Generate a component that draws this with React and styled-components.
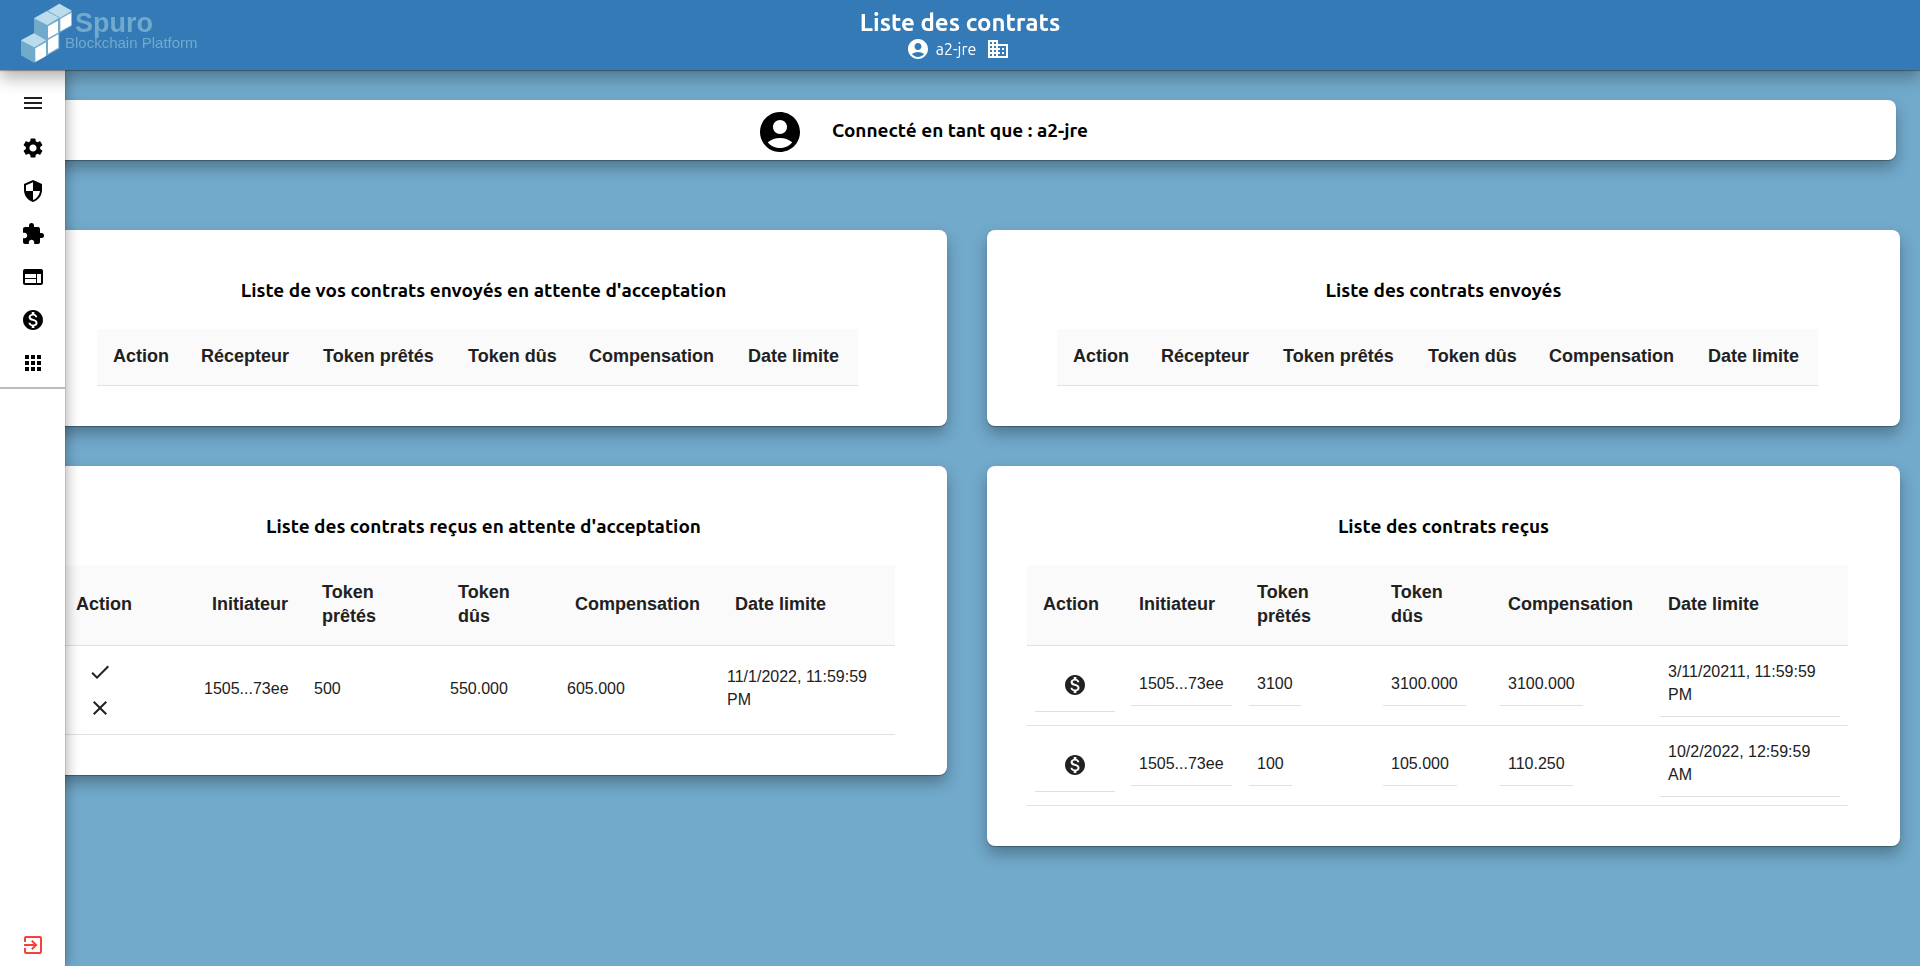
import React from "react";
import styled, { createGlobalStyle } from "styled-components";
import {
  MdMenu,
  MdSettings,
  MdSecurity,
  MdExtension,
  MdWeb,
  MdMonetizationOn,
  MdApps,
  MdExitToApp,
  MdAccountCircle,
  MdBusiness,
  MdCheck,
  MdClose,
} from "react-icons/md";

const elevation = "0 1px 1px rgba(0, 0, 0, 0.3), 0 8px 16px rgba(0, 0, 0, 0.3)";
const titleFont = '"Ubuntu", "Noto Sans", sans-serif';

const GlobalStyle = createGlobalStyle`
  * { box-sizing: border-box; }
  body {
    margin: 0;
    background: #72aacc;
    color: #000;
    font-family: "Liberation Sans", Arial, sans-serif;
    font-size: 16px;
  }
  button {
    padding: 0;
    border: 0;
    background: none;
    color: inherit;
    cursor: pointer;
  }
  svg { display: block; }
`;

const Page = styled.div`
  display: flex;
  flex-direction: column;
  min-height: 100vh;
`;

const Header = styled.header`
  position: sticky;
  top: 0;
  z-index: 3;
  display: grid;
  grid-template-columns: 1fr auto 1fr;
  height: 70px;
  background: #337ab7;
  color: #fff;
  box-shadow: ${elevation};
`;

const HeaderCenter = styled.div`
  display: flex;
  flex-direction: column;
  align-items: center;
  padding-top: 9px;
  font-family: ${titleFont};
`;

const PageTitle = styled.h1`
  margin: 0;
  font-size: 24px;
  line-height: 28px;
`;

const UserLine = styled.div`
  display: flex;
  align-items: center;
  padding-right: 4px;
  line-height: 24px;
  font-size: 16px;
`;

const UserName = styled.span`
  padding: 0 10px 0 6px;
`;

const Sidebar = styled.nav`
  position: fixed;
  top: 70px;
  bottom: 0;
  left: 0;
  z-index: 2;
  display: flex;
  flex-direction: column;
  justify-content: space-between;
  width: 65px;
  background: #fff;
  box-shadow: 0 0 1px rgba(0, 0, 0, 0.5), 2px 0 12px rgba(0, 0, 0, 0.3);
`;

const SideGroup = styled.div`
  display: flex;
  flex-direction: column;
  align-items: center;
  gap: 19px;
  padding: ${(p) => (p.$divided ? "21px 0 12px 1px" : "0 0 9px 1px")};
  border-bottom: ${(p) => (p.$divided ? "2px solid #bdbdbd" : "0")};
`;

const SideButton = styled.button`
  color: ${(p) => p.$color || "#000"};
  margin-bottom: ${(p) => (p.$spaced ? "2px" : "0")};
`;

const Main = styled.main`
  display: flex;
  flex-direction: column;
  gap: 70px;
  padding: 30px 20px 40px;
`;

const Banner = styled.section`
  display: grid;
  grid-template-columns: 1fr auto 1fr;
  align-items: center;
  height: 60px;
  margin: 0 4px;
  border-radius: 8px;
  background: #fff;
  box-shadow: ${elevation};
`;

const BannerIcon = styled.div`
  justify-self: end;
  padding: 4px 28px 0 0;
`;

const Heading = styled.h2`
  margin: 0;
  font-family: ${titleFont};
  font-size: 19px;
  line-height: 40px;
  text-align: center;
`;

const Cards = styled.div`
  display: grid;
  grid-template-columns: 927fr 913fr;
  align-items: start;
  gap: 40px;
`;

const Card = styled.section`
  min-width: 0;
  padding: 40px;
  border-radius: 8px;
  background: #fff;
  box-shadow: ${elevation};
`;

const TableWrap = styled.div`
  width: ${(p) => (p.$fit ? "fit-content" : "auto")};
  margin: 19px auto 0;
  padding-right: 12px;
`;

const Table = styled.table`
  width: ${(p) => (p.$fit ? "auto" : "100%")};
  table-layout: ${(p) => (p.$fit ? "auto" : "fixed")};
  border-collapse: separate;
  border-spacing: 0;
  color: #212121;
`;

const Col = styled.col`
  width: ${(p) => p.$w}px;
`;

const Th = styled.th`
  padding: 15px 16px 17px;
  border-bottom: 1px solid #e0e0e0;
  background: #fafafa;
  font-size: 18px;
  line-height: 24px;
  text-align: left;

  &:first-child { border-top-left-radius: 4px; }
`;

const Td = styled.td`
  padding: 4px 8px 8px;
  border-bottom: 1px solid #e0e0e0;
  line-height: 23px;
`;

const Value = styled.div`
  width: fit-content;
  padding: 10px 8px;
  border-bottom: 1px solid #e0e0e0;
`;

const PayAction = styled.div`
  display: flex;
  justify-content: center;
  padding: 18px 0 14px;
  border-bottom: 1px solid #e0e0e0;
`;

const PendingActions = styled.div`
  display: flex;
  flex-direction: column;
  align-items: flex-start;
  gap: 12px;
  padding: 10px 0 6px 20px;
`;

const LogoLink = styled.a`
  justify-self: start;
`;

const Logo = () => (
  <svg width="220" height="70" viewBox="0 0 220 70" role="img" aria-label="Spuro Blockchain Platform">
    <g transform="scale(0.33333)">
      <path fill="#72aacc" d="M63 121 102 100 102 55 178 11 215 32 215 78 178 99 178 146 102 188 63 166Z" />
      <path fill="#bcdcec" d="M63 121 102 100 138 121 103 142ZM102 55 140 34 177 53 142 75ZM144 32 178 11 215 32 181 53Z" />
      <path fill="#fff" d="M106 145 138 127 138 168 106 186ZM144 120 175 103 175 143 144 161ZM144 79 174 62 174 98 144 115ZM181 57 214 38 214 76 181 94Z" />
    </g>
    <text x="75" y="32" fill="#72aacc" fontSize="27" fontWeight="700">Spuro</text>
    <text x="65" y="48" fill="#72aacc" fontSize="15">Blockchain Platform</text>
  </svg>
);

const sideItems = [
  ["Menu", MdMenu, "#231f20", true],
  ["Paramètres", MdSettings],
  ["Sécurité", MdSecurity],
  ["Extensions", MdExtension],
  ["Pages", MdWeb],
  ["Tokens", MdMonetizationOn],
  ["Applications", MdApps],
];

const sentHead = ["Action", "Récepteur", "Token prêtés", "Token dûs", "Compensation", "Date limite"];
const receivedHead = ["Action", "Initiateur", "Token prêtés", "Token dûs", "Compensation", "Date limite"];
const sentWidths = [88, 122, 145, 121, 159, 126];
const pendingWidths = [136, 110, 136, 117, 160, 176];
const receivedWidths = [96, 118, 134, 117, 160, 196];

const pendingRows = [["1505...73ee", "500", "550.000", "605.000", "11/1/2022, 11:59:59 PM"]];
const receivedRows = [
  ["1505...73ee", "3100", "3100.000", "3100.000", "3/11/20211, 11:59:59 PM"],
  ["1505...73ee", "100", "105.000", "110.250", "10/2/2022, 12:59:59 AM"],
];

const ContractCard = ({ title, head, widths, fit, children }) => (
  <Card aria-label={title}>
    <Heading>{title}</Heading>
    <TableWrap $fit={fit}>
      <Table $fit={fit}>
        <colgroup>
          {widths.map((w, i) => (
            <Col key={i} $w={w} />
          ))}
        </colgroup>
        <thead>
          <tr>
            {head.map((h) => (
              <Th key={h} scope="col">{h}</Th>
            ))}
          </tr>
        </thead>
        <tbody>{children}</tbody>
      </Table>
    </TableWrap>
  </Card>
);

export default function App() {
  return (
    <Page>
      <GlobalStyle />
      <Header>
        <LogoLink href="#accueil">
          <Logo />
        </LogoLink>
        <HeaderCenter>
          <PageTitle>Liste des contrats</PageTitle>
          <UserLine>
            <MdAccountCircle size={24} />
            <UserName>a2-jre</UserName>
            <MdBusiness size={24} />
          </UserLine>
        </HeaderCenter>
      </Header>
      <Sidebar>
        <SideGroup $divided>
          {sideItems.map(([label, Icon, color, spaced]) => (
            <SideButton key={label} type="button" aria-label={label} $color={color} $spaced={spaced}>
              <Icon size={24} />
            </SideButton>
          ))}
        </SideGroup>
        <SideGroup>
          <SideButton type="button" aria-label="Déconnexion" $color="#f44336">
            <MdExitToApp size={24} />
          </SideButton>
        </SideGroup>
      </Sidebar>
      <Main>
        <Banner>
          <BannerIcon>
            <MdAccountCircle size={48} />
          </BannerIcon>
          <Heading>Connecté en tant que : a2-jre</Heading>
        </Banner>
        <Cards>
          <ContractCard
            title="Liste de vos contrats envoyés en attente d'acceptation"
            head={sentHead}
            widths={sentWidths}
            fit
          />
          <ContractCard title="Liste des contrats envoyés" head={sentHead} widths={sentWidths} fit />
          <ContractCard
            title="Liste des contrats reçus en attente d'acceptation"
            head={receivedHead}
            widths={pendingWidths}
          >
            {pendingRows.map((row, i) => (
              <tr key={i}>
                <Td>
                  <PendingActions>
                    <button type="button" aria-label="Accepter">
                      <MdCheck size={24} />
                    </button>
                    <button type="button" aria-label="Refuser">
                      <MdClose size={24} />
                    </button>
                  </PendingActions>
                </Td>
                {row.map((v, j) => (
                  <Td key={j}>{v}</Td>
                ))}
              </tr>
            ))}
          </ContractCard>
          <ContractCard title="Liste des contrats reçus" head={receivedHead} widths={receivedWidths}>
            {receivedRows.map((row, i) => (
              <tr key={i}>
                <Td>
                  <PayAction>
                    <button type="button" aria-label="Payer">
                      <MdMonetizationOn size={24} />
                    </button>
                  </PayAction>
                </Td>
                {row.map((v, j) => (
                  <Td key={j}>
                    <Value>{v}</Value>
                  </Td>
                ))}
              </tr>
            ))}
          </ContractCard>
        </Cards>
      </Main>
    </Page>
  );
}
